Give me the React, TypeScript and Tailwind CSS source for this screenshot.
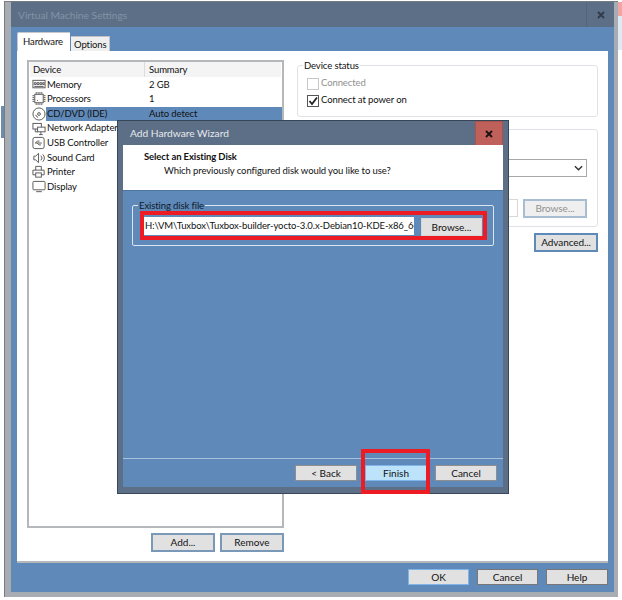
import type { ReactNode } from "react"

const font = "font-['Lato',sans-serif]"

function Btn({ children, className = "" }: { children: ReactNode; className?: string }) {
  return (
    <div className={`flex items-center justify-center bg-[#e1e1e1] border border-[#adadad] text-[10px] text-[#111] ${className}`}>
      {children}
    </div>
  )
}

const icons: Record<string, ReactNode> = {
  Memory: (
    <>
      <rect x="0.5" y="2.5" width="13" height="8" />
      <path d="M2 5h2v2H2zM5 5h2v2H5zM8 5h2v2H8zM11 5h1.500v2H11zM2 9h10" />
    </>
  ),
  Processors: (
    <>
      <rect x="2.5" y="2.5" width="9" height="9" />
      <path d="M4 0v2M6 0v2M8 0v2M10 0v2M4 12v2M6 12v2M8 12v2M10 12v2M0 4h2M0 6h2M0 8h2M0 10h2M12 4h2M12 6h2M12 8h2M12 10h2" />
      <path d="M5 9h1" />
    </>
  ),
  "CD/DVD (IDE)": (
    <>
      <circle cx="7" cy="7.500" r="6.500" />
      <circle cx="7" cy="7.500" r="1.500" />
      <path d="M3.500 8.500a3.600 3.600 0 0 0 2.500 2.600" />
    </>
  ),
  "Network Adapter": (
    <>
      <rect x="0.5" y="1.500" width="9" height="6" />
      <rect x="5.5" y="5.500" width="8" height="5" fill="#fff" />
      <path d="M3 7.500v3h2.500M9 10.500v3M7 13.500h4" />
    </>
  ),
  "USB Controller": (
    <>
      <rect x="0.5" y="1.500" width="12" height="12" rx="2" />
      <path d="M3 7.500h7M3 7.500l2.500-2h2M5 7.500l2 2h2" />
    </>
  ),
  "Sound Card": (
    <>
      <path d="M1.500 5.500h2l3-3v10l-3-3h-2z" />
      <path d="M9 5a3.500 3.500 0 0 1 0 5M11 3.500a6 6 0 0 1 0 8" />
    </>
  ),
  Printer: (
    <>
      <path d="M3.500 5.500v-4h6v4M3.500 10.500H0.500v-5h12v5h-3" />
      <rect x="3.500" y="8.500" width="6" height="4.500" />
    </>
  ),
  Display: (
    <>
      <rect x="0.5" y="1.500" width="13" height="9" rx="1" />
      <path d="M4 12.500h6" />
    </>
  ),
}

const devices = [
  ["Memory", "2 GB"],
  ["Processors", "1"],
  ["CD/DVD (IDE)", "Auto detect"],
  ["Network Adapter", ""],
  ["USB Controller", ""],
  ["Sound Card", ""],
  ["Printer", ""],
  ["Display", ""],
]

function DeviceList() {
  return (
    <div className="w-[257px] h-[468px] border-2 border-[#b5b8bb] bg-white text-[9.500px] tracking-[-0.1px] text-[#111]">
      <div className="flex h-[15px] mx-[1px] bg-[#f4f4f4] leading-[16px] mb-[0.5px]">
        <div className="w-[115px] pl-[3px] border-r border-[#dcdcdc]">Device</div>
        <div className="pl-[4px]">Summary</div>
      </div>
      {devices.map(([name, summary]) => (
        <div key={name} className="flex h-[14.6px] items-center pl-[3px]">
          <svg viewBox="0 0 14 15" className="w-[14px] h-[14px] shrink-0 fill-none stroke-[#555] stroke-[1]">
            {icons[name]}
          </svg>
          <div className={`flex flex-1 h-full items-center pl-[1px] whitespace-nowrap ${summary === "Auto detect" ? "bg-[#5f89b8]" : ""}`}>
            <span className="w-[102px]">{name}</span>
            <span>{summary}</span>
          </div>
        </div>
      ))}
    </div>
  )
}

function Check({ checked, dim }: { checked?: boolean; dim?: boolean }) {
  return (
    <div className={`w-[12px] h-[12px] border bg-white flex items-center justify-center ${dim ? "border-[#c8c8c8]" : "border-[#555]"}`}>
      {checked && (
        <svg viewBox="0 0 10 10" className="w-[10px] h-[10px] fill-none stroke-[#222] stroke-[1.800]">
          <path d="M1.500 5l2.500 3 5-6.500" />
        </svg>
      )}
    </div>
  )
}

function RightColumn() {
  return (
    <div className="w-[301px] flex flex-col text-[9.500px] tracking-[-0.1px] text-[#111]">
      <div className="relative h-[52px] mt-[5px] border border-[#dfe3e8] rounded-[3px] pl-[9px] pt-[9px]">
        <div className="absolute left-[5px] -top-[7px] bg-white px-[1px] leading-[14px]">Device status</div>
        <div className="flex items-center gap-[1px] h-[17px] text-[#8f8f8f]">
          <Check dim />
          <span className="ml-[1px]">Connected</span>
        </div>
        <div className="flex items-center gap-[1px] h-[17px]">
          <Check checked />
          <span className="ml-[1px]">Connect at power on</span>
        </div>
      </div>
      <div className="mt-[12px] h-[98px] border border-[#dfe3e8] rounded-[3px] flex flex-col items-end pr-[10px] pt-[29px]">
        <div className="w-[270px] h-[18px] border border-[#a8a8a8] bg-white flex items-center justify-end pr-[3px]">
          <svg viewBox="0 0 10 6" className="w-[9px] h-[6px] fill-none stroke-[#333] stroke-[1.600]">
            <path d="M1 1l4 4 4-4" />
          </svg>
        </div>
        <div className="flex gap-[5px] mt-[22px]">
          <div className="w-[30px] h-[18px] border border-[#d8d8d8] flex items-center justify-center">
            <svg viewBox="0 0 10 6" className="w-[8px] h-[5px] fill-none stroke-[#b5b5b5] stroke-[1.400]">
              <path d="M1 1l4 4 4-4" />
            </svg>
          </div>
          <Btn className="w-[64px] h-[19px] border-2 !border-[#a9bdd2] !bg-[#efefef] !text-[#8f8f8f]">Browse...</Btn>
        </div>
      </div>
      <div className="flex justify-end mt-[6px]">
        <Btn className="w-[64px] h-[19px] border-2 !border-[#5f89b8]">Advanced...</Btn>
      </div>
    </div>
  )
}

function Wizard() {
  return (
    <div className="absolute left-[106px] top-[118px] w-[392px] h-[374px] bg-[#5d6f86] border border-[#38465a] flex flex-col">
      <div className="flex h-[24px] shrink-0 justify-between pl-[12px] pr-[5px]">
        <span className="text-[10.200px] leading-[24px] text-[#e6e9ee]">Add Hardware Wizard</span>
        <div className="w-[28px] h-[25px] bg-[#c0605a] border border-[#a8524c] flex items-center justify-center">
          <svg viewBox="0 0 8 8" className="w-[8px] h-[8px] fill-none stroke-[#1c1010] stroke-[1.800]">
            <path d="M1 1l6 6M7 1l-6 6" />
          </svg>
        </div>
      </div>
      <div className="flex-1 mx-[5px] mb-[6px] bg-[#5f89b8] flex flex-col">
        <div className="h-[46px] bg-white border-b border-[#4d769f] pl-[21px] pt-[5px] text-[9.500px] tracking-[-0.1px] leading-[14px] text-[#111]">
          <div className="font-bold">Select an Existing Disk</div>
          <div className="pl-[20px]">Which previously configured disk would you like to use?</div>
        </div>
        <div className="relative mt-[14px] mx-[9px] h-[41px] border border-[#dbe6f0] rounded-[2px] flex items-start pl-[10px] pt-[11px]">
          <div className="absolute left-[5px] -top-[7px] bg-[#5f89b8] px-[1px] text-[9.500px] tracking-[-0.1px] leading-[13px] text-[#0f1b2a]">Existing disk file</div>
          <div className="w-[271px] h-[18px] bg-white text-[9.500px] tracking-[-0.1px] leading-[18px] pl-[2px] text-[#111] overflow-hidden whitespace-nowrap">
            H:\VM\Tuxbox\Tuxbox-builder-yocto-3.0.x-Debian10-KDE-x86_64
          </div>
          <Btn className="ml-[7px] mt-[1px] w-[61px] h-[18px] !border-[#d6d6d6]">Browse...</Btn>
        </div>
        <div className="mt-auto border-t border-[#a9c0da]">
          <div className="flex justify-end gap-[8px] pr-[6px] pt-[6px] pb-[6px]">
            <Btn className="w-[62px] h-[16px] !border-[#8e8e8e]">&lt; Back</Btn>
            <Btn className="w-[62px] h-[16px] !bg-[#bde3fb] !border-[#7eb4ea]">Finish</Btn>
            <Btn className="w-[62px] h-[16px] !border-[#8e8e8e]">Cancel</Btn>
          </div>
        </div>
      </div>
    </div>
  )
}

export default function App() {
  return (
    <div className={`relative w-[622px] h-[600px] bg-white overflow-hidden pl-[4px] pt-[1px] ${font}`}>
      {/* bits of the desktop showing past the window frame */}
      <div className="absolute left-[1px] top-[106px] w-[3px] h-[32px] bg-[#6f8cab]" />
      <div className="absolute left-[618px] top-[2px] w-[4px] h-[14px] bg-[#f4a3a3]" />
      <div className="absolute left-[618px] top-[16px] w-[4px] h-[34px] bg-[#dfeaf5]" />
      <div className="w-[614px] h-[596px] bg-[#a7adb3] border-l border-t border-[#777c82] pl-[6px]">
        <div className="relative w-[603px] h-[590px] bg-[#5f89b8] flex flex-col">
          <div className="h-[25px] shrink-0 bg-[#5d6f86] flex justify-between pl-[7px]">
            <span className="text-[10.200px] leading-[26px] text-[#8292a6]">Virtual Machine Settings</span>
            <div className="w-[28px] flex items-center justify-center border-l border-[#55667c]">
              <svg viewBox="0 0 8 8" className="w-[8px] h-[8px] fill-none stroke-[#2f3b4b] stroke-[1.800]">
                <path d="M1 1l6 6M7 1l-6 6" />
              </svg>
            </div>
          </div>
          <div className="flex items-end h-[24px] pl-[6px] shrink-0 text-[9.500px] tracking-[-0.1px] text-[#111]">
            <div className="w-[53px] h-[19px] bg-white border-t border-l border-[#c4c8cc] rounded-tl-[2px] leading-[17px] pl-[5px]">Hardware</div>
            <div className="w-[39px] h-[15px] ml-[1px] bg-[#efefef] border-t border-r border-[#bfc3c7] leading-[15px] pl-[3px]">Options</div>
          </div>
          <div className="ml-[6px] w-[591px] h-[512px] shrink-0 bg-white border-b-2 border-[#b5b8bb] flex gap-[13px] pl-[10px] pt-[9px]">
            <div className="flex flex-col items-end">
              <DeviceList />
              <div className="flex gap-[5px] mt-[5px]">
                <Btn className="w-[64px] h-[19px] border-2 !border-[#7a98b8]">Add...</Btn>
                <Btn className="w-[64px] h-[19px] border-2 !border-[#7a98b8]">Remove</Btn>
              </div>
            </div>
            <RightColumn />
          </div>
          <div className="flex justify-end gap-[8px] pr-[6px] pt-[6px]">
            <Btn className="w-[61px] h-[16px] !border-[#7eb4ea]">OK</Btn>
            <Btn className="w-[61px] h-[16px] !border-[#777]">Cancel</Btn>
            <Btn className="w-[62px] h-[16px] !border-[#777]">Help</Btn>
          </div>
          <Wizard />
        </div>
      </div>
      <div className="absolute left-[140px] top-[211px] w-[347px] h-[29px] border-4 border-[#ed1c24]" />
      <div className="absolute left-[361px] top-[449px] w-[69px] h-[45px] border-4 border-[#ed1c24]" />
    </div>
  )
}
